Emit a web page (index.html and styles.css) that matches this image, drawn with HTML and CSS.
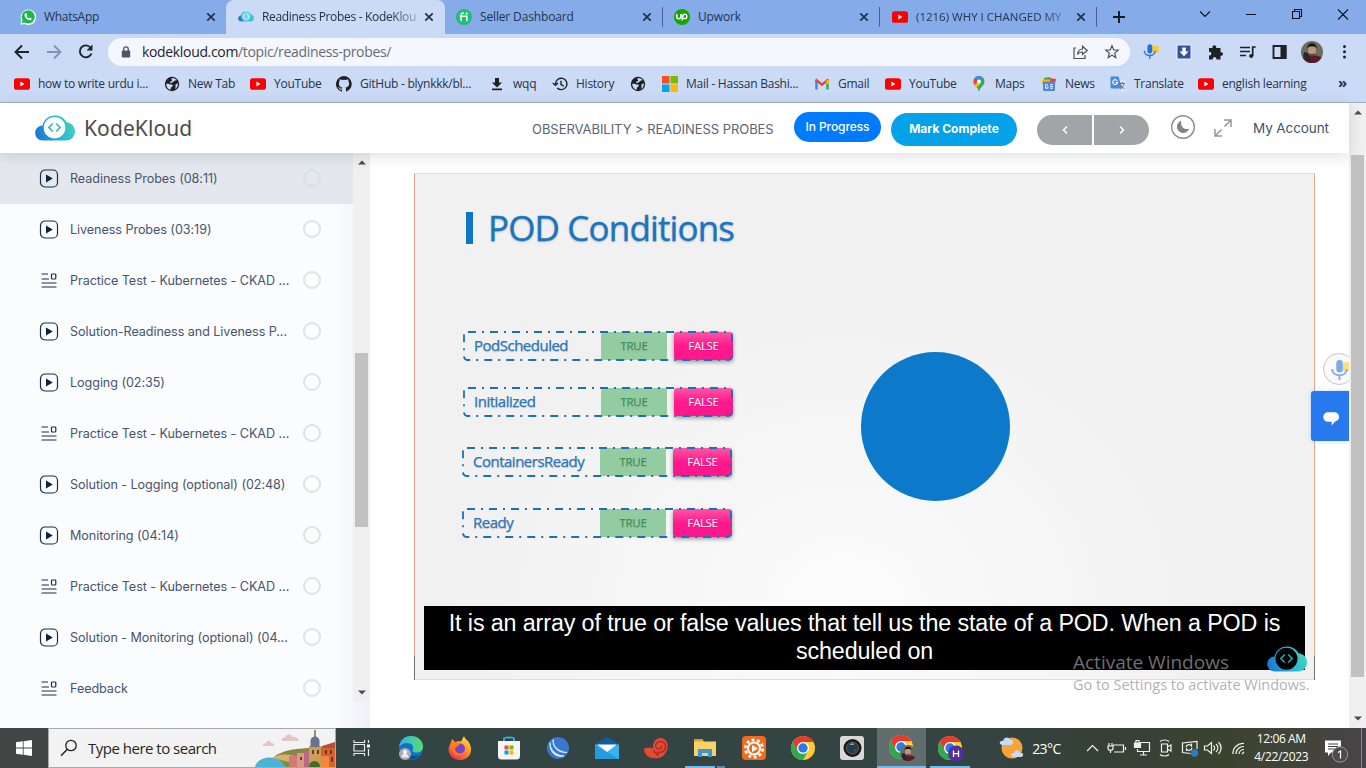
FILE: index.html
```html
<!DOCTYPE html>
<html lang="en">
<head>
<meta charset="utf-8">
<title>Readiness Probes - KodeKloud</title>
<link rel="stylesheet" href="styles.css">
</head>
<body>
<svg class="defs" width="0" height="0" aria-hidden="true">
  <defs>
    <linearGradient id="gCloud" x1="0" x2="1" y1="0.6" y2="0.4"><stop offset="0" stop-color="#1c78cf"/><stop offset=".5" stop-color="#20b4d8"/><stop offset="1" stop-color="#45d3bd"/></linearGradient>
    <linearGradient id="gEdge" x1="0" x2="1"><stop offset="0" stop-color="#2bb3e8"/><stop offset="1" stop-color="#5bdc6a"/></linearGradient>
    <linearGradient id="gFox" x1=".8" x2=".2" y1="0" y2="1"><stop offset="0" stop-color="#ffe04a"/><stop offset=".5" stop-color="#ff8a1f"/><stop offset="1" stop-color="#f5245c"/></linearGradient>
  </defs>
  <symbol id="yt" viewBox="0 0 16 16"><rect y="2.2" width="16" height="11.6" rx="2.6" fill="#f00"/><path d="M6.4 5.600v4.800l4-2.400z" fill="#fff"/></symbol>
  <symbol id="x" viewBox="0 0 10 10"><path d="M1.300 1.300l7.400 7.400M8.700 1.300L1.300 8.700" stroke="#23304a" stroke-width="1.700"/></symbol>
  <symbol id="globe" viewBox="0 0 16 16"><circle cx="8" cy="8" r="7.200" fill="#202124"/><path d="M2.200 7.800c2.200-.4 3.900.6 5.600.8 1.600.3 1.200 2-.2 2.400-1 .3-.7 1.700-1.200 3C4 13.200 2.200 11 2.200 7.800zM8 1.900c2.100 0 3.600.8 4.700 2.200-1.100 0-1.600 1-2.700 1-.4 1.400-2 1-2.600 2-.9.4-1.500-.5-1.100-1.300.5-.8 1.900-.3 1.900-1.500C7.600 3.600 7 2.600 8 1.900zM13.800 7.300c.3 2.500-.8 4.600-2.800 5.700.2-1.400 1-1.900.4-3.100-.3-1 .8-2.300 2.400-2.600z" fill="#cbdaf5"/></symbol>
  <symbol id="cloud" viewBox="0 0 40 26"><path d="M8 25.500C3.300 25.500.2 22 .2 18c0-3.800 2.800-7 7.200-7.500C8.800 4.300 13.800.4 19.700.4c5.200 0 9.700 2.500 11.800 6.900C36.500 7.700 40 11.500 40 16.200c0 5.300-3.900 9.300-9 9.300z" fill="url(#gCloud)"/></symbol>
  <symbol id="brackets" viewBox="0 0 16 12"><path d="M6 1.500L1.500 6 6 10.500M10 1.500L14.500 6 10 10.500" fill="none" stroke="#24b0c8" stroke-width="1.600"/></symbol>
  <symbol id="chrome" viewBox="0 0 24 24"><circle cx="12" cy="12" r="12" fill="#fc3"/><path d="M12 6h10.400A12 12 0 0 0 1.600 6l5.200 9z" fill="#e33b2e"/><path d="M1.600 6a12 12 0 0 0 10.400 18l5.200-9H6.800z" fill="#2da94f"/><circle cx="12" cy="12" r="6" fill="#fff"/><circle cx="12" cy="12" r="4.700" fill="#2f78ea"/></symbol>
  <symbol id="avatar" viewBox="0 0 22 22"><circle cx="11" cy="11" r="11" fill="#6b6d5c"/><path d="M1.500 16.500c4-3 15-3 19.200 0A11 11 0 0 1 1.500 16.500z" fill="#571d29"/><path d="M3.500 11l4 1 2 9-4-1.500-3.500-5z" fill="#222930"/><ellipse cx="11" cy="9.500" rx="4" ry="5.500" fill="#c2937d"/><path d="M6.500 7.500c-1-7 10-7 9 0L14 5.500H8z" fill="#17161a"/><path d="M7.500 12.500c2 .5 5 .5 7 0-.7 4-6.300 4-7 0z" fill="#5d4237"/></symbol>
  <symbol id="mic" viewBox="0 0 22 20"><rect x="13" y="2" width="8.500" height="9" rx="1.500" fill="#fbcb20"/><rect x="7" y="0" width="6.200" height="12" rx="3.100" fill="#1f72e6"/><path d="M3 8.500c0 8 14 8 14 0M10 14.500V19" fill="none" stroke="#3378dc" stroke-width="1.900"/></symbol>
  <symbol id="play" viewBox="0 0 20 20"><rect x="1.500" y="1" width="17" height="17" rx="4.500" fill="none" stroke="#1c2d47" stroke-width="1.200"/><path d="M7 5.600v7.800L13.800 9.500z" fill="#0c2340"/></symbol>
  <symbol id="quiz" viewBox="0 0 20 20"><path d="M2.500 3H9M2.500 8H10M2.500 12H17.500M2.500 16H17.500" stroke="#1c2d47" stroke-width="1.200"/><rect x="12.500" y="3" width="4.300" height="5" rx=".8" fill="none" stroke="#1c2d47" stroke-width="1.200"/></symbol>
  <symbol id="tri" viewBox="0 0 8 5"><path d="M0 4.500L4 .5l4 4z" fill="#4c4c4c"/></symbol>
</svg>

<header class="tabs">
  <div class="tab t1"><svg class="fav" viewBox="0 0 16 16"><path d="M.3 15.700l1.200-4A7.700 7.700 0 1 1 4.700 15z" fill="#fff"/><circle cx="8.200" cy="7.800" r="6.600" fill="#18b84b"/><path d="M1.700 14.300l1-3.400 2.500 2.400z" fill="#18b84b"/><path d="M5.400 4.200l1.300.2.600 1.600-.7.900c.6 1.200 1.400 1.900 2.500 2.400l.9-.9 1.700.8c0 1.500-1 2-2 2C7 11 4.500 8.300 4.400 6c0-.8.400-1.500 1-1.800z" fill="#fff"/></svg><span class="tt">WhatsApp</span><svg class="x"><use href="#x"/></svg></div>
  <div class="tab active"><svg class="fav" viewBox="0 0 40 32"><g transform="translate(0 2)"><use href="#cloud" width="40" height="26"/><circle cx="20" cy="13" r="9.500" fill="#7fd0e8" stroke="#c6effa" stroke-width="2"/><path d="M17 9l-4 4 4 4M23 9l4 4-4 4" fill="none" stroke="#e9fbff" stroke-width="2"/></g></svg><span class="tt fade">Readiness Probes - KodeKlou</span><svg class="x"><use href="#x"/></svg></div>
  <div class="tab t3"><svg class="fav" viewBox="0 0 16 16"><circle cx="8" cy="8" r="8" fill="#1dbf73"/><path d="M5.200 12.200V6c0-1.600 1-2 2.600-1.800M3.600 7.300h7.200v4.900" fill="none" stroke="#fff" stroke-width="1.600"/><circle cx="10.700" cy="4.600" r="1.100" fill="#fff"/></svg><span class="tt">Seller Dashboard</span><svg class="x"><use href="#x"/></svg></div>
  <div class="tab t4"><svg class="fav" viewBox="0 0 16 16"><circle cx="8" cy="8" r="8" fill="#14a800"/><path d="M2.800 5v2.700c0 2.700 4 2.700 4 0V5c1 3 2 4.600 3.800 4.600 3 0 3-4.400 0-4.400-1.700 0-1.900 1.500-2.600 6.300" fill="none" stroke="#fff" stroke-width="1.400"/></svg><span class="tt">Upwork</span><svg class="x"><use href="#x"/></svg></div>
  <div class="tab t5"><svg class="fav"><use href="#yt"/></svg><span class="tt fade5">(1216) WHY I CHANGED MY</span><svg class="x"><use href="#x"/></svg></div>
  <svg class="newtab" viewBox="0 0 12 12"><path d="M6 0v12M0 6h12" stroke="#14191f" stroke-width="1.900"/></svg>
  <svg class="winctl" viewBox="0 0 160 28" fill="none" stroke="#10141c" stroke-width="1.100"><path d="M10 11.500l5 5 5-5M56 14.500h10M102.500 11.500h7v7h-7zM104.500 11.500v-2h7v7h-2M148 9.500l10 10M158 9.500l-10 10"/></svg>
</header>

<div class="toolbar">
  <svg class="nav" viewBox="0 0 100 20" fill="none" stroke-width="1.900"><path d="M16 10H2.500M9 3.500L2.500 10 9 16.500" stroke="#1d222b"/><path d="M34 10h13.500M41 3.500l6.500 6.500-6.500 6.500" stroke="#8492b0"/><path d="M77.500 5.500A6 6 0 1 0 78.500 11.500" stroke="#1d222b"/><path d="M79.500 2.500v6h-6z" fill="#1d222b"/></svg>
  <div class="url"><svg class="lock" viewBox="0 0 10 12"><rect x=".8" y="4.500" width="8.400" height="7" rx="1" fill="#50565e"/><path d="M2.700 5V3.200a2.300 2.300 0 0 1 4.600 0V5" fill="none" stroke="#50565e" stroke-width="1.300"/></svg><span class="addr">kodekloud.com<i>/topic/readiness-probes/</i></span>
    <svg class="urlicons" viewBox="0 0 50 18" fill="none" stroke="#4d535b" stroke-width="1.200"><path d="M5 5H3v10.500h11V12M6.500 11.500c.5-4 2.500-5.500 5-5.500V3.200l4.700 4.300-4.700 4V9c-2.500 0-4 .8-5 2.500z"/><path d="M41 2.600l1.700 4.300 4.500.3-3.500 2.900 1.100 4.500-3.800-2.500-3.800 2.500 1.100-4.500-3.500-2.900 4.500-.3z"/></svg>
  </div>
  <svg class="exts" viewBox="0 0 222 22"><use href="#mic" x="10" y="3" width="17" height="16"/>
    <rect x="45" y="4" width="14" height="14" fill="#33539b" stroke="#edf2fb"/><path d="M50.300 6.500h3.500v4h2.700L52 15.200l-4.500-4.700h2.800z" fill="#fff"/>
    <path d="M77 7h3.500c-.8-3.800 4.500-3.800 3.700 0h4.300v4.200c3.300-.7 3.300 4 0 3.600V18.500h-4c.2-3.500-4-3.500-3.800 0H77v-4c3.200.2 3.200-4 0-3.800z" fill="#202124"/>
    <path d="M108 6.500h10M108 10.500h10M108 14.500h6M120.700 15V6h3" stroke="#202124" stroke-width="1.700" fill="none"/><circle cx="119.200" cy="15" r="2" fill="#202124"/>
    <path d="M141.500 5h12v12h-12z" fill="none" stroke="#202124" stroke-width="1.900"/><path d="M148.500 4h6v14h-6z" fill="#202124"/>
    <use href="#avatar" x="169" y="0" width="22" height="22"/>
    <g fill="#202124"><circle cx="212.500" cy="5.500" r="1.500"/><circle cx="212.500" cy="10.800" r="1.500"/><circle cx="212.500" cy="16" r="1.500"/></g></svg>
</div>

<nav class="bookmarks">
  <a class="b1"><svg><use href="#yt"/></svg>how to write urdu i...</a>
  <a class="b2"><svg><use href="#globe"/></svg>New Tab</a>
  <a class="b3"><svg><use href="#yt"/></svg>YouTube</a>
  <a class="b4"><svg viewBox="0 0 16 16"><path d="M8 0a8 8 0 0 0-2.500 15.600c.4.100.5-.2.500-.4v-1.500c-2.200.5-2.700-1-2.700-1-.4-.9-.9-1.200-.9-1.200-.7-.5.100-.5.100-.5.800.1 1.200.8 1.200.8.700 1.200 1.900.9 2.300.7.100-.5.300-.9.500-1.100-1.800-.2-3.600-.9-3.600-4 0-.9.300-1.600.8-2.100-.1-.2-.4-1 .1-2.100 0 0 .7-.2 2.200.8a7.500 7.500 0 0 1 4 0c1.500-1 2.200-.8 2.200-.8.400 1.100.2 1.900.1 2.100.5.600.8 1.300.8 2.100 0 3.100-1.900 3.800-3.700 4 .3.300.6.800.6 1.500v2.200c0 .2.100.5.500.4A8 8 0 0 0 8 0z" fill="#202124"/></svg>GitHub - blynkkk/bl...</a>
  <a class="b5"><svg viewBox="0 0 16 16"><path d="M6 2h4v4.500h3L8 11.500 3 6.500h3zM3 12.500h10v1.700H3z" fill="#202124"/></svg>wqq</a>
  <a class="b6"><svg viewBox="0 0 16 16"><path d="M3.500 8a5.700 5.700 0 1 1 1.700 4M.8 7l2.700 2.300L6 7M9 4.800v3.700l2.800 1.600" fill="none" stroke="#202124" stroke-width="1.400"/></svg>History</a>
  <a class="b7"><svg><use href="#globe"/></svg></a>
  <a class="b8"><svg viewBox="0 0 16 16"><path fill="#f25022" d="M0 0h7.500v7.500H0z"/><path fill="#7fba00" d="M8.500 0H16v7.500H8.500z"/><path fill="#00a4ef" d="M0 8.500h7.500V16H0z"/><path fill="#ffb900" d="M8.500 8.500H16V16H8.500z"/></svg>Mail - Hassan Bashi...</a>
  <a class="b9"><svg viewBox="0 0 16 16" fill="none" stroke-width="2.500"><path d="M2.500 13.500V4" stroke="#4285f4"/><path d="M13.500 13.500V4" stroke="#34a853"/><path d="M1.500 3.500L8 8.700l6.500-5.200" stroke="#ea4335"/><path d="M13.500 4v4" stroke="#fbbc04"/></svg>Gmail</a>
  <a class="b10"><svg><use href="#yt"/></svg>YouTube</a>
  <a class="b11"><svg viewBox="0 0 16 16"><path d="M8 16C7.500 11.500 2.500 9.500 2.500 5.500a5.500 5.500 0 0 1 11 0C13.500 9.500 8.500 11.500 8 16z" fill="#34a853"/><path d="M3.500 8.500L11 .8A5.500 5.500 0 0 0 3.500 2.500z" fill="#4285f4"/><path d="M3.800 2.200L8 5.500 3.500 9C2 6.500 2.500 4 3.800 2.200z" fill="#ea4335"/><path d="M3.600 8.700l4-4 1.500 3.800-3.400 3z" fill="#fbbc04"/><circle cx="8" cy="5.500" r="2" fill="#fff"/></svg>Maps</a>
  <a class="b12"><svg viewBox="0 0 16 16"><path d="M3 2l6-1 1 4H3z" fill="#34a853"/><path d="M8 2l7 1-1 5H8z" fill="#ea4335"/><path d="M1 3.500h8V8H1z" fill="#fbbc04"/><rect x="2" y="5.500" width="12" height="9.500" rx="1" fill="#4c86e8"/><path d="M7 8.700H4.500v3.500H7v-1.500H6M9 8.700h3M9 10.500h3M9 12.200h3" fill="none" stroke="#fff" stroke-width=".9"/></svg>News</a>
  <a class="b13"><svg viewBox="0 0 16 16"><path d="M6 4h9.500v11.500H9z" fill="#dce2e8"/><path d="M.5.500h8L12 12.500H2a1.500 1.500 0 0 1-1.500-1.500z" fill="#4c86e8"/><path d="M7.300 5A2.400 2.400 0 1 0 7.500 6.500H5.400" fill="none" stroke="#fff" stroke-width="1.100"/><path d="M9.500 7.500h5.500M12 6v1.500M14 8c-.5 2-2 4-3.500 5M10.500 8.500c1 2 2.500 3.500 4 4" fill="none" stroke="#69747e"/></svg>Translate</a>
  <a class="b14"><svg><use href="#yt"/></svg>english learning</a>
  <b class="more">»</b>
</nav>

<section class="viewport">
  <div class="page">
    <header class="top">
      <svg class="logo" viewBox="0 0 40 26"><use href="#cloud" width="40" height="26"/><circle cx="19.500" cy="12.700" r="10.800" fill="#fff"/><use href="#brackets" x="12.500" y="7" width="14" height="11"/></svg>
      <span class="brand">KodeKloud</span>
      <span class="crumb">OBSERVABILITY &gt; READINESS PROBES</span>
      <span class="prog">In Progress</span>
      <span class="mark">Mark Complete</span>
      <div class="pager"><span><svg viewBox="0 0 8 10"><path d="M6 1.500L2.500 5 6 8.500"/></svg></span><span><svg viewBox="0 0 8 10"><path d="M2 1.500L5.500 5 2 8.500"/></svg></span></div>
      <svg class="moon" viewBox="0 0 26 26"><circle cx="13" cy="13" r="11.300" fill="none" stroke="#8b8b8b" stroke-width="1.400"/><path d="M11.200 6.700a6.300 6.300 0 1 0 8 8c-5 1.800-9-2.500-8-8z" fill="#858585"/></svg>
      <svg class="full" viewBox="0 0 18 18"><path d="M10.500 7.500L17 1M10 1h7v7M7.500 10.500L1 17M1 10v7h7" fill="none" stroke="#979797" stroke-width="1.500"/></svg>
      <span class="acct">My Account</span>
    </header>
    <div class="body">
      <aside class="side">
        <ul class="lessons">
          <li class="on"><svg><use href="#play"/></svg><span>Readiness Probes (08:11)</span><i></i></li>
          <li><svg><use href="#play"/></svg><span>Liveness Probes (03:19)</span><i></i></li>
          <li><svg><use href="#quiz"/></svg><span>Practice Test - Kubernetes - CKAD ...</span><i></i></li>
          <li><svg><use href="#play"/></svg><span>Solution-Readiness and Liveness P...</span><i></i></li>
          <li><svg><use href="#play"/></svg><span>Logging (02:35)</span><i></i></li>
          <li><svg><use href="#quiz"/></svg><span>Practice Test - Kubernetes - CKAD ...</span><i></i></li>
          <li><svg><use href="#play"/></svg><span>Solution - Logging (optional) (02:48)</span><i></i></li>
          <li><svg><use href="#play"/></svg><span>Monitoring (04:14)</span><i></i></li>
          <li><svg><use href="#quiz"/></svg><span>Practice Test - Kubernetes - CKAD ...</span><i></i></li>
          <li><svg><use href="#play"/></svg><span>Solution - Monitoring (optional) (04...</span><i></i></li>
          <li><svg><use href="#quiz"/></svg><span>Feedback</span><i></i></li>
        </ul>
        <div class="sbar"><svg><use href="#tri"/></svg><div class="thumb"></div><svg class="down"><use href="#tri"/></svg></div>
      </aside>
      <main>
        <div class="slide">
          <div class="left">
            <h1><i></i><span>POD Conditions</span></h1>
            <div class="cond c1"><svg class="dash"><rect x="1" y="1" width="268" height="28" rx="4"/></svg><span>PodScheduled</span><b class="yes">TRUE</b><b class="no">FALSE</b></div>
            <div class="cond c2"><svg class="dash"><rect x="1" y="1" width="268" height="28" rx="4"/></svg><span>Initialized</span><b class="yes">TRUE</b><b class="no">FALSE</b></div>
            <div class="cond c3"><svg class="dash"><rect x="1" y="1" width="268" height="28" rx="4"/></svg><span>ContainersReady</span><b class="yes">TRUE</b><b class="no">FALSE</b></div>
            <div class="cond c4"><svg class="dash"><rect x="1" y="1" width="268" height="28" rx="4"/></svg><span>Ready</span><b class="yes">TRUE</b><b class="no">FALSE</b></div>
          </div>
          <div class="ball"></div>
          <p class="caption"><span>It is an array of true or false values that tell us the state of a POD. When a POD is</span><span>scheduled on</span></p>
          <svg class="wm" viewBox="0 0 40 26"><use href="#cloud" width="40" height="26"/><circle cx="19.500" cy="12.700" r="11" fill="#000"/><use href="#brackets" x="12.500" y="7" width="14" height="11"/></svg>
        </div>
        <div class="activate"><p>Activate Windows</p><p class="sub">Go to Settings to activate Windows.</p></div>
        <div class="micbtn"><svg><use href="#mic"/></svg></div>
        <div class="chat"><svg viewBox="0 0 16 14"><path d="M5 .3h6a4.500 4.500 0 0 1 2 8.700c-1.500.9-2.700 2.700-4.300 4.600V9.800H5A4.700 4.700 0 0 1 5 .3z" fill="#fff"/></svg></div>
      </main>
    </div>
  </div>
  <div class="sbar pagebar"><svg><use href="#tri"/></svg><div class="thumb"></div><svg class="down"><use href="#tri"/></svg></div>
</section>

<footer class="taskbar">
  <div class="start"><svg viewBox="0 0 16 16"><path d="M0 2.300l6.800-1v6.300H0zM7.600 1.200L16 0v7.600H7.600zM0 8.400h6.800v6.300L0 13.700zM7.600 8.400H16V16l-8.400-1.200z" fill="#fff"/></svg></div>
  <div class="search"><svg class="mag" viewBox="0 0 18 18"><circle cx="11" cy="6.500" r="5.200" fill="none" stroke="#222" stroke-width="1.300"/><path d="M7.300 10.300L1 16.700" stroke="#222" stroke-width="1.500"/></svg><span>Type here to search</span>
    <svg class="town" viewBox="0 0 80 38"><path d="M8 17c-1-2 2-3 3-3 1-3 5-3 5 0 4 0 4 3 2 3zM27 12c-1-4 3-3 4-5 2-3 6-2 6 1 5-1 8 3 6 4z" fill="#e6c3ca"/><path d="M16 31c8-10 26-13 64-12v19H24z" fill="#87883f"/><path d="M0 38c2-9 15-12 25-7l6 7z" fill="#4fb2d2"/><path d="M18 29c8-6 20-3 28 0l-8 5z" fill="#d8b26a"/><path d="M34 27h8v11h-8z" fill="#cf7b78"/><path d="M42 24h9v14h-9z" fill="#d99a82"/><path d="M49 22h7v16h-7z" fill="#b76a85"/><path d="M54 17h12v21H54z" fill="#cf9b58"/><path d="M55.500 12c0-6 9-6 9 0v6h-9z" fill="#697288"/><path d="M60 1v7" stroke="#7b6b4f" stroke-width="1.500"/><path d="M66 19h14v19H66z" fill="#d9612f"/><path d="M66 27h8v11h-8z" fill="#f0893f"/><path d="M67 17l13-4v6H66z" fill="#b0503a"/><path d="M57 21h2v4h-2zM62 21h2v4h-2zM70 21h2v4h-2zM75 21h2v4h-2zM76 28h2v5h-2zM45 28h2v3h-2z" fill="#633c37"/><path d="M54 38c0-8 11-8 11 0z" fill="#466b2b"/></svg>
  </div>
  <div class="apps">
    <div><svg viewBox="0 0 24 24" fill="none" stroke="#e6eaea" stroke-width="1.200"><path d="M4 4v2.500h10.500V4M4 20v-2.500h10.500V20M4 8.500h10.500v6.500H4zM18.500 4v3M18.500 13v7"/><path d="M17 8.500h3v3h-3z" fill="#fff" stroke="none"/></svg></div>
    <div><svg viewBox="0 0 24 24"><circle cx="12" cy="12" r="12" fill="#1172c4"/><path d="M0 11C1 3 7 0 12 0c7 0 12 5 12 10.500 0 4-3 6-6.500 6-4 0-4.500-2-3.500-3.500C16 8 6 3.500 0 11z" fill="url(#gEdge)"/><path d="M8 12c-1 6 4 9 12 7.500-4 5.500-11 5-14 1z" fill="#0c4d9b"/><circle cx="6" cy="18" r="6" fill="#a7adb2"/><circle cx="6" cy="16" r="2.200" fill="#eee"/><path d="M2.500 21.500c0-5 7-5 7 0z" fill="#eee"/></svg></div>
    <div><svg viewBox="0 0 24 24"><path d="M3 6l1-3 3 3c2-1 4-1 6-.5L16 0c1 4 5 4 6.500 10C25 18 19 24 12 24 4 24-1 17 1 11z" fill="url(#gFox)"/><circle cx="12" cy="12.500" r="5" fill="#7544c4"/><path d="M4 6c3-1 5 1 8 2-1 2-4 2-5 5-1 3 3 6 7 4-5 6-13 0-10-11z" fill="#ff7a1c"/></svg></div>
    <div><svg viewBox="0 0 24 24"><path d="M7 6V2.500C7 1 17 1 17 2.500V6" fill="none" stroke="#39a9dc" stroke-width="2"/><path d="M1 5h22v15a3.500 3.500 0 0 1-3.500 3.500h-15A3.500 3.500 0 0 1 1 20z" fill="#f5f5f5"/><path d="M7.500 9.500h4v4h-4z" fill="#f25022"/><path d="M12.500 9.500h4v4h-4z" fill="#7fba00"/><path d="M7.500 14.500h4v4h-4z" fill="#00a4ef"/><path d="M12.500 14.500h4v4h-4z" fill="#ffb900"/></svg></div>
    <div><svg viewBox="0 0 24 24"><circle cx="12" cy="12" r="11" fill="#3878cd"/><path d="M7 3.500c0 7 5 12 14 13-8 1-15-5-14-13zM4 6.500c0 7.500 6 13 14 13.500-8 2-15-4-14-13.500z" fill="#e9f2ff" stroke="#e9f2ff" stroke-width=".7"/></svg></div>
    <div><svg viewBox="0 0 24 24"><path d="M0 8l12-7 12 7v3H0z" fill="#0f5ca8"/><path d="M0 8l12 6 12-6v15H0z" fill="#37b2ed"/><path d="M2 8.500h20L12 16z" fill="#fff"/><path d="M0 9l24 14H0z" fill="#249be0"/></svg></div>
    <div><svg viewBox="0 0 24 24"><path d="M0 13c4-2 8-1 9 0C8 5 14 0 20 3c4 2 5 8 2 13-3 6-8 7-13 6-5 0-9-4-9-9z" fill="#e34a34"/><path d="M13 16c7 2 10-4 8-8-3-5-11-2-9 3 2 4 7 1 5-1M10 14c0 3 2 4 5 4M14 20l-1-2" fill="none" stroke="#a52920" stroke-width="1.300"/></svg></div>
    <div><svg viewBox="0 0 24 24"><path d="M1 3h8l2 2.500h12V20H1z" fill="#f8d267"/><path d="M1 3h8l2 2.500H1z" fill="#dda423"/><path d="M5 21v-8h14v8h-4v-4H9v4z" fill="#3c94d5"/></svg><em class="run"></em></div>
    <div><svg viewBox="0 0 24 24"><rect width="24" height="24" rx="4" fill="#f26a1b"/><circle cx="12" cy="12.500" r="8.700" fill="none" stroke="#fff" stroke-width="2.800" stroke-dasharray="3 2.470"/><circle cx="12" cy="12.500" r="6" fill="none" stroke="#fff" stroke-width="2"/><path d="M10 9v7l6-3.500z" fill="#fff"/></svg></div>
    <div><svg><use href="#chrome"/></svg></div>
    <div><svg viewBox="0 0 24 24"><rect width="24" height="24" rx="3" fill="#dad9d6"/><circle cx="12.500" cy="12" r="9" fill="#181a1c"/><circle cx="12.500" cy="12" r="6" fill="#33383d" stroke="#606060"/><circle cx="12.500" cy="12" r="3.500" fill="#143f56"/><path d="M9 8.500l4-1.500 1 2z" fill="#9bc5d6"/><path d="M13 14l4-1-2 3z" fill="#9a3530"/></svg></div>
    <div class="cur"><svg class="wide" viewBox="0 0 28 26"><use href="#chrome" width="24" height="24"/><use href="#avatar" x="11" y="10" width="16" height="16"/></svg></div>
    <div><svg class="wide" viewBox="0 0 28 26"><use href="#chrome" width="24" height="24"/><circle cx="18" cy="17.500" r="8" fill="#50309c"/><path d="M15.500 14.500v6.500M20.500 14.500v6.500M15.500 17.700h5" stroke="#fff" stroke-width="1.300"/></svg><em class="run one"></em></div>
  </div>
  <div class="tray">
    <svg class="sun" viewBox="0 0 26 24"><circle cx="13" cy="12" r="10.500" fill="#f7a53b"/><path d="M3 9c-4-1-2-5 1-4 1-5 7-4 7-1 4-1 4 4 1 5zM14 21c-3-1-2-4 1-4 1-4 6-3 6 0 4-1 4 4 1 4z" fill="#c5dbf7"/></svg>
    <span class="temp">23°C</span>
    <svg class="ticons" viewBox="0 0 172 24" fill="none" stroke="#f0f2f0" stroke-width="1.200"><path d="M7 15l5.500-5.500L18 15"/><path d="M33 9h10.500v7H34M45.500 11v3M32 7v3M29 7v3M28 10h5v2c0 3-5 3-5 0zM30.500 14v3"/><path d="M60.500 6.500h9v9H57.500V13M60 19h7M63.500 16v3"/><path d="M54.500 7h6v4.500h-6z" fill="#f0f2f0"/><path d="M56 7V4.500h3V7"/><path d="M81.500 8h6v8h-6zM88 10.500l3-1.500v6l-3-1.500M80 5.500c2-2 7-2 9 0M80 18.500c2 2 7 2 9 0"/><path d="M117 13V5.500L102.500 7v9.500l8 1M106 11c1-3 4-3 5.500-1V7.500M112 12c-1 3-4 3-5.500 1v2"/><circle cx="114.500" cy="17" r="3.700" fill="#2b7dc6" stroke="none"/><path d="M124.500 10h3l4-3.500v11l-4-3.500h-3zM133.500 9.500c1.500 1.500 1.500 3.500 0 5M136 8c2.500 2.500 2.500 5.500 0 8M138.500 6c3.500 4 3.500 8 0 12"/><path d="M153 18A10 10 0 0 1 164 7.500M156 18a7.500 7.500 0 0 1 8-7.500M159 18a5 5 0 0 1 5-4.500M162 18l2-2"/></svg>
    <div class="clock"><span>12:06 AM</span><span class="date">4/22/2023</span></div>
    <svg class="note" viewBox="0 0 28 28"><path d="M3 4.500h16v12H9l-3 3.500v-3.500H3z" fill="#fff"/><path d="M6 8h10M6 10.500h10M6 13h7" stroke="#444"/><circle cx="18" cy="18.500" r="7.700" fill="#4c4c4c" stroke="#999"/><path d="M16 16.500l2.500-1.500v7.500" fill="none" stroke="#fff" stroke-width="1.200"/></svg>
    <div class="peek"></div>
  </div>
</footer>
</body>
</html>
```
FILE: styles.css
```css
*, *::before, *::after { box-sizing: border-box; }
body { margin: 0; width: 1366px; height: 768px; overflow: hidden; display: flex; flex-direction: column; background: #fff; font-family: "Open Sans", "Noto Sans", sans-serif; }
svg { display: block; flex: none; }
.defs { position: absolute; }
i { font-style: normal; }
p { margin: 0; }

/* browser tabs */
.tabs { height: 34px; flex: none; background: #85abe8; display: flex; font-size: 12px; letter-spacing: -0.15px; color: #26344d; }
.tab { height: 34px; display: flex; align-items: center; white-space: nowrap; padding: 0 8px 0 12px; gap: 8px; flex: none; }
.t1 { width: 226px; padding-left: 20px; }
.active { width: 219px; background: #cbdaf5; border-radius: 8px 8px 0 0; color: #26303f; }
.t3 { width: 218px; padding-left: 11px; }
.t4 { width: 217px; padding-left: 11px; }
.t5 { width: 217px; padding-left: 12px; }
.t3, .t4, .t5 { position: relative; }
.t3::after, .t4::after, .t5::after { content: ""; position: absolute; right: 0; top: 7px; width: 1px; height: 20px; background: #4a638f; }
.t3 .x, .t4 .x, .t5 .x { margin-right: 3px; }
.t1 .tt { letter-spacing: -0.3px; }
.fav { width: 16px; height: 16px; }
.tt { flex: 1; line-height: 20px; }
.fade { -webkit-mask-image: linear-gradient(90deg, #000 82%, rgba(0,0,0,.3)); }
.fade5 { -webkit-mask-image: linear-gradient(90deg, #000 82%, rgba(0,0,0,.3)); letter-spacing: 0; font-size: 11.500px; }
.active .tt { letter-spacing: -0.32px; }
.x { width: 10px; height: 10px; margin-right: 2px; }
.active .x { margin-right: 3px; }
.newtab { width: 12px; height: 12px; margin: 11px 0 0 16px; }
.winctl { width: 160px; height: 28px; margin-left: 65px; }

/* address bar */
.toolbar { height: 38px; flex: none; background: #cbdaf5; display: flex; align-items: flex-start; padding-top: 4px; }
.nav { width: 100px; height: 20px; margin: 4px -5px 0 13px; }
.url { width: 1022px; height: 28px; border-radius: 14px; background: #f4f7fd; display: flex; align-items: center; }
.lock { width: 10px; height: 12px; margin-left: 13px; }
.addr { margin-left: 11px; font-size: 14px; letter-spacing: -0.34px; color: #1f2329; flex: 1; line-height: 18px; padding-bottom: 1px; }
.addr i { color: #666b73; }
.urlicons { width: 50px; height: 18px; margin-right: 9px; }
.exts { width: 222px; height: 22px; margin: 3px 0 0 2px; }

/* bookmarks */
.bookmarks { height: 31px; flex: none; background: #cbdaf5; border-bottom: 1px solid #9fb0cf; display: flex; padding: 0 0 7px 14px; font-size: 12px; color: #25334b; white-space: nowrap; letter-spacing: -0.25px; }
.bookmarks a { display: flex; align-items: center; gap: 8px; flex: none; }
.bookmarks svg { width: 16px; height: 16px; }
.b1 { width: 150px; } .b2 { width: 86px; } .b3 { width: 86px; } .b4 { width: 153px; } .b5 { width: 63px; }
.b6 { width: 78px; } .b7 { width: 32px; } .b8 { width: 152px; } .b9 { width: 71px; } .b10 { width: 86px; }
.b11 { width: 70px; } .b12 { width: 69px; } .b13 { width: 88px; } .b14 { width: 140px; }
.more { font-size: 15px; line-height: 21px; }

/* page */
.viewport { height: 625px; flex: none; display: flex; }
.page { width: 1349px; flex: none; display: flex; flex-direction: column; font-family: Inter, sans-serif; }
.top { height: 50px; flex: none; display: flex; align-items: center; background: #fff; box-shadow: 0 3px 14px rgba(60,70,110,.18); position: relative; z-index: 1; white-space: nowrap; }
.logo { width: 40px; height: 26px; margin-left: 35px; }
.brand { font: 400 21px "Noto Sans", sans-serif; color: #4b4b4b; margin-left: 9px; width: 447px; letter-spacing: .1px; }
.crumb { font-size: 13px; letter-spacing: -0.05px; color: #5b6472; width: 263px; margin-left: 1px; padding-top: 2px; }
.prog { width: 87px; height: 30px; margin: 0 10px 2px -1px; border-radius: 15px; background: #007bff; color: #fff; font-size: 12px; font-weight: 500; letter-spacing: -0.1px; line-height: 30px; text-align: center; }
.mark { width: 126px; height: 33px; border-radius: 17px; background: #04a2e8; color: #fff; font-size: 12px; font-weight: 700; line-height: 32px; text-align: center; margin-top: 2px; }
.pager { display: flex; gap: 2px; width: 112px; height: 30px; margin: 4px 0 0 20px; border-radius: 15px; overflow: hidden; }
.pager span { flex: 1; background: #a3a4a8; display: flex; align-items: center; justify-content: center; }
.pager svg { width: 8px; height: 10px; fill: none; stroke: #fff; stroke-width: 1.500; }
.moon { width: 26px; height: 26px; margin: 0 0 2px 21px; }
.full { width: 18px; height: 18px; margin-left: 18px; }
.acct { font-size: 13.500px; margin-left: 21px; color: #43526b; letter-spacing: -0.1px; padding-bottom: 1px; }
.body { flex: 1; display: flex; }
.side { width: 370px; flex: none; display: flex; background: linear-gradient(90deg, #fbfcfe 90%, #eff1f8); }
.lessons { list-style: none; margin: 0; padding: 0; width: 353px; height: 575px; overflow: hidden; }
.lessons li { height: 51px; display: flex; align-items: center; padding: 0 32px 0 39px; font-size: 12.600px; color: #46556d; white-space: nowrap; }
.lessons .on { background: #e4e8ee; }
.lessons svg { width: 20px; height: 20px; }
.lessons span { flex: 1; margin-left: 11px; letter-spacing: -0.06px; padding-bottom: 1px; }
.lessons li > i { width: 18px; height: 18px; border: 2px solid #dfe2e6; border-radius: 50%; margin-bottom: 2px; background: #fdfdfe; }
.lessons .on > i { background: none; border-color: #dadfe5; }
.sbar { width: 17px; height: 549px; background: #f0f0f0; display: flex; flex-direction: column; align-items: center; flex: none; }
.sbar svg { width: 8px; height: 5px; margin-top: 7px; }
.sbar .thumb { width: 13px; height: 174px; background: #c1c1c1; margin-top: 188px; }
.sbar .down { transform: rotate(180deg); margin: auto 0 7px; }
.sbar.pagebar { height: 625px; }
.pagebar .thumb { height: 522px; margin-top: 40px; }

main { flex: 1; position: relative; padding: 20px 0 0 44px; overflow: hidden; background: #fff; }
.slide { position: relative; width: 901px; height: 507px; border: 1px solid #e4a58c; border-top-color: #ecd9d4; border-bottom-color: #ddd; background: radial-gradient(ellipse 390px 320px at 430px 430px, #fcfcfc, #f5f5f5 60%, #f1f1f1); display: flex; font-family: "Open Sans", sans-serif; }
.slide::before { content: ""; position: absolute; left: -1px; bottom: -1px; width: 901px; height: 24px; border: solid #77716d; border-width: 0 1px; }
.left { width: 398px; padding: 38px 0 0 48px; }
h1 { margin: 0 0 87px 3px; height: 32px; display: flex; align-items: center; font-weight: 400; font-size: 35px; color: #1975bf; letter-spacing: -0.85px; white-space: nowrap; text-shadow: 0 1px 2px rgba(0,0,0,.25); }
h1 i { width: 7px; height: 32px; background: #0f75c5; margin-right: 15px; }
h1 span { padding-bottom: 2px; -webkit-text-stroke: .3px #1975bf; }
.cond { position: relative; display: flex; align-items: center; width: 270px; height: 30px; color: #2a76b9; font-size: 15px; letter-spacing: -0.5px; text-shadow: 0 1px 1px rgba(0,0,0,.15); }
.c1 { margin-bottom: 26px; } .c2 { margin-bottom: 30px; } .c3 { margin-bottom: 31px; }
.c3, .c4 { margin-left: -1px; }
.dash { position: absolute; z-index: 1; left: 0; top: 0; width: 270px; height: 30px; }
.dash rect { fill: none; stroke: #1d70b5; stroke-width: 1.800; stroke-dasharray: 8 6 2 6; }
.cond span { width: 127px; margin-left: 11px; padding-bottom: 2px; -webkit-text-stroke: .25px #2a76b9; }
.cond b { font-weight: 400; font-size: 11.500px; letter-spacing: -0.3px; text-align: center; height: 28px; line-height: 28px; border-radius: 3px; }
.yes { width: 66px; background: #92cca0; color: #3c8a57; margin-right: 7px; }
.no { width: 59px; background: linear-gradient(#fe56a5, #ff188d 50%); color: #fff; box-shadow: 0 2px 4px rgba(0,0,0,.4); position: relative; }
.ball { width: 149px; height: 149px; border-radius: 50%; background: #0c79cb; margin: 178px 0 0 48px; }
.caption { position: absolute; left: 9px; bottom: 9px; width: 881px; height: 64px; background: #000; color: #fff; font: 23.300px/28px "Liberation Sans", Arial, sans-serif; text-align: center; padding-top: 3px; white-space: nowrap; }
.caption span { display: block; letter-spacing: -0.12px; }
.wm { position: absolute; right: 7px; bottom: 7px; width: 40px; height: 26px; }
.activate { position: absolute; left: 703px; top: 496px; color: rgba(150,150,150,.75); font-family: "Open Sans", sans-serif; white-space: nowrap; font-size: 19px; line-height: 26px; }
.activate .sub { font-size: 14.500px; line-height: 20px; letter-spacing: -0.03px; }
.micbtn { position: absolute; left: 953px; top: 200px; width: 32px; height: 32px; border-radius: 50%; border: 1px solid #c7c7c7; background: #fafafa; padding: 6px 0 0 5px; }
.micbtn svg { width: 23px; height: 21px; opacity: .58; }
.chat { position: absolute; left: 941px; top: 238px; width: 38px; height: 50px; border-radius: 3px 0 0 3px; background: #2879ee; padding: 21px 0 0 12px; box-shadow: 0 0 4px rgba(40,120,240,.3); }
.chat svg { width: 16px; height: 14px; }

/* taskbar */
.taskbar { height: 40px; flex: none; background: linear-gradient(90deg, #344443 25%, #354443 72%, #354036 80%, #3b4330 90%, #45443f 97%, #484448); display: flex; color: #fff; white-space: nowrap; }
.start { width: 48px; background: #434444; display: flex; align-items: center; justify-content: center; }
.start svg { width: 16px; height: 16px; }
.search { width: 288px; background: #f2f2f2; border: 1px solid #aaa; display: flex; align-items: center; font-size: 15px; letter-spacing: -0.5px; color: #262626; flex: none; }
.mag { width: 18px; height: 18px; margin-left: 11px; }
.search span { margin-left: 10px; flex: 1; }
.town { width: 80px; height: 38px; }
.apps { display: flex; flex: none; margin-left: 1px; }
.apps > div { width: 49.100px; height: 40px; display: flex; align-items: center; justify-content: center; position: relative; }
.apps svg { width: 24px; height: 24px; }
.apps .wide { width: 28px; height: 26px; margin-left: 3px; margin-top: 1px; }
.apps > .cur { background: #616c6c; border-bottom: 2px solid #76b9ed; }
.run { position: absolute; bottom: 0; left: 4px; width: 40px; height: 2px; background: linear-gradient(90deg, #76b9ed 76%, #344443 76%, #344443 79%, #588db0 79%); }
.run.one { background: #76b9ed; }
.tray { flex: 1; display: flex; align-items: center; }
.sun { width: 26px; height: 24px; margin-left: 24px; margin-top: -1px; }
.temp { font-size: 14px; margin-left: 7px; width: 48px; letter-spacing: -0.6px; }
.ticons { width: 172px; height: 24px; }
.clock { display: flex; flex-direction: column; font-size: 12px; line-height: 18px; text-align: center; letter-spacing: -0.4px; width: 54px; margin-left: 2px; }
.date { letter-spacing: -0.3px; }
.note { width: 28px; height: 28px; margin-left: 14px; margin-top: 3px; }
.peek { margin-left: auto; margin-right: 4px; width: 1px; height: 40px; background: #888; }
```
